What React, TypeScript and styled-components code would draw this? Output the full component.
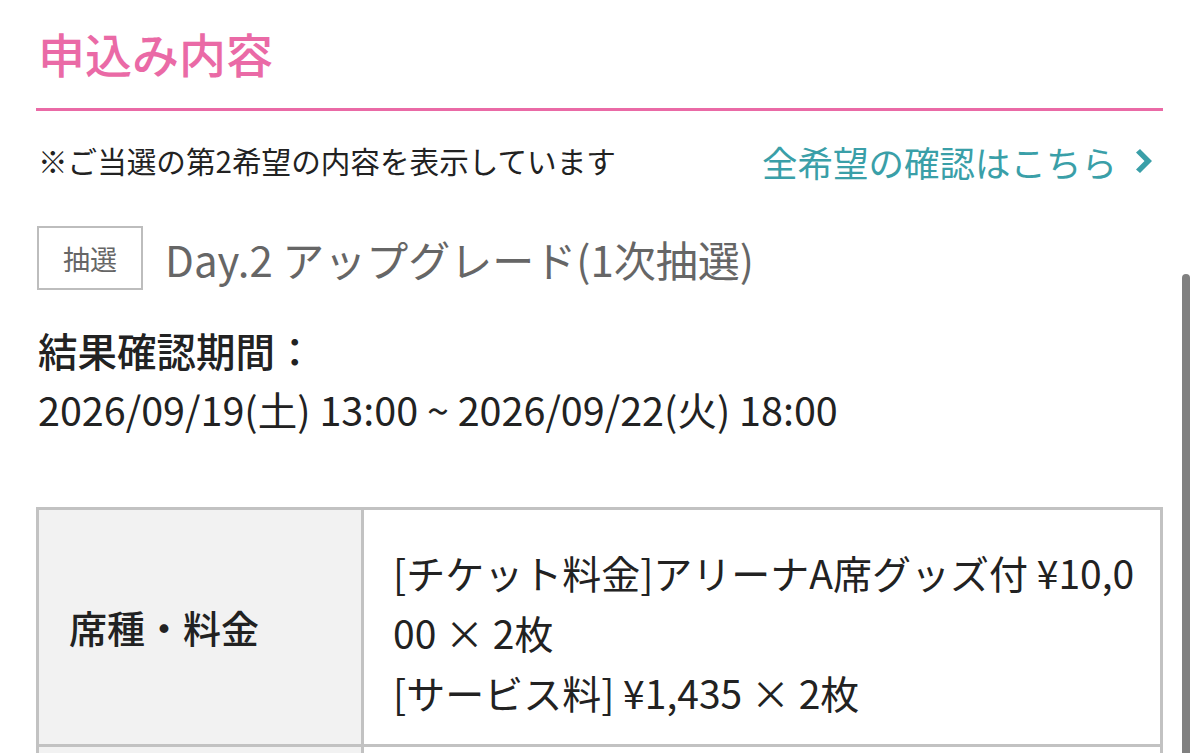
import React from "react";
import styled, { createGlobalStyle } from "styled-components";

const GlobalStyle = createGlobalStyle`
  html, body {
    margin: 0;
    padding: 0;
    background: #fff;
    overflow: hidden;
  }
  body {
    font-family: "Noto Sans CJK JP", "Noto Sans", sans-serif;
    color: #222;
  }
`;

const Page = styled.main`
  position: relative;
  height: 753px;
  overflow: hidden;
  padding: 0 37px 0 36px;
`;

const SectionTitle = styled.h2`
  margin: 0;
  padding: 20px 2px 22px;
  font-size: 47px;
  font-weight: 500;
  line-height: 1.4;
  color: #ea6aa6;
  border-bottom: 3px solid #ea6aa6;
`;

const NoticeRow = styled.div`
  display: flex;
  justify-content: space-between;
  align-items: center;
  padding: 24px 2px 0;
`;

const Notice = styled.p`
  margin: 0;
  font-size: 29.6px;
  line-height: 1.5;
  color: #222;
`;

const AllLink = styled.a`
  display: flex;
  align-items: center;
  gap: 18px;
  font-size: 35.5px;
  line-height: 1.5;
  color: #3a9fa8;
  text-decoration: none;
  padding-right: 8px;
`;

const EventRow = styled.div`
  display: flex;
  align-items: center;
  gap: 22px;
  margin-top: 38px;
  padding-left: 1px;
`;

const Badge = styled.span`
  display: inline-flex;
  align-items: center;
  justify-content: center;
  width: 102px;
  height: 60px;
  border: 2px solid #bdbdbd;
  font-size: 27px;
  color: #666;
`;

const EventName = styled.h3`
  margin: 0;
  font-size: 42px;
  font-weight: 400;
  color: #666;
`;

const Period = styled.div`
  margin-top: 30px;
  font-size: 39.5px;
  line-height: 1.5;
  color: #222;
  padding-left: 2px;
`;

const PeriodLabel = styled.div`
  font-weight: 500;
`;

const Table = styled.table`
  margin-top: 68px;
  width: 100%;
  border-collapse: collapse;
  font-size: 39px;
`;

const Row = styled.tr<{ $height?: number }>`
  height: ${({ $height }) => ($height ? `${$height}px` : "auto")};
`;

const HeadCell = styled.th`
  width: 264px;
  background: #f2f2f2;
  border: 3px solid #c2c2c2;
  padding: 0 28px 0 30px;
  text-align: left;
  font-size: 38px;
  font-weight: 500;
  color: #222;
`;

const DataCell = styled.td`
  border: 3px solid #c2c2c2;
  padding: 32px 16px 22px 29px;
  line-height: 1.54;
  color: #222;
  word-break: break-all;
`;

const Scrollbar = styled.div`
  position: absolute;
  right: 10px;
  top: 274px;
  width: 8px;
  height: 500px;
  border-radius: 4px;
  background: #808080;
`;

const Chevron = () => (
  <svg width="18" height="26" viewBox="0 0 18 26" aria-hidden>
    <path d="M1 4.5 L5 1 L17 13 L5 25 L1 21.5 L9.5 13 Z" fill="#3a9fa8" />
  </svg>
);

export default function App() {
  return (
    <>
      <GlobalStyle />
      <Page>
        <SectionTitle>申込み内容</SectionTitle>
        <NoticeRow>
          <Notice>※ご当選の第2希望の内容を表示しています</Notice>
          <AllLink href="#">
            全希望の確認はこちら
            <Chevron />
          </AllLink>
        </NoticeRow>
        <EventRow>
          <Badge>抽選</Badge>
          <EventName>Day.2 アップグレード(1次抽選)</EventName>
        </EventRow>
        <Period>
          <PeriodLabel>結果確認期間：</PeriodLabel>
          <div>2026/09/19(土) 13:00 ~ 2026/09/22(火) 18:00</div>
        </Period>
        <Table>
          <tbody>
            <Row>
              <HeadCell>席種・料金</HeadCell>
              <DataCell>
                [チケット料金]アリーナA席グッズ付 ¥10,000 × 2枚
                <br />
                [サービス料] ¥1,435 × 2枚
              </DataCell>
            </Row>
            <Row $height={120}>
              <HeadCell />
              <DataCell />
            </Row>
          </tbody>
        </Table>
        <Scrollbar />
      </Page>
    </>
  );
}
